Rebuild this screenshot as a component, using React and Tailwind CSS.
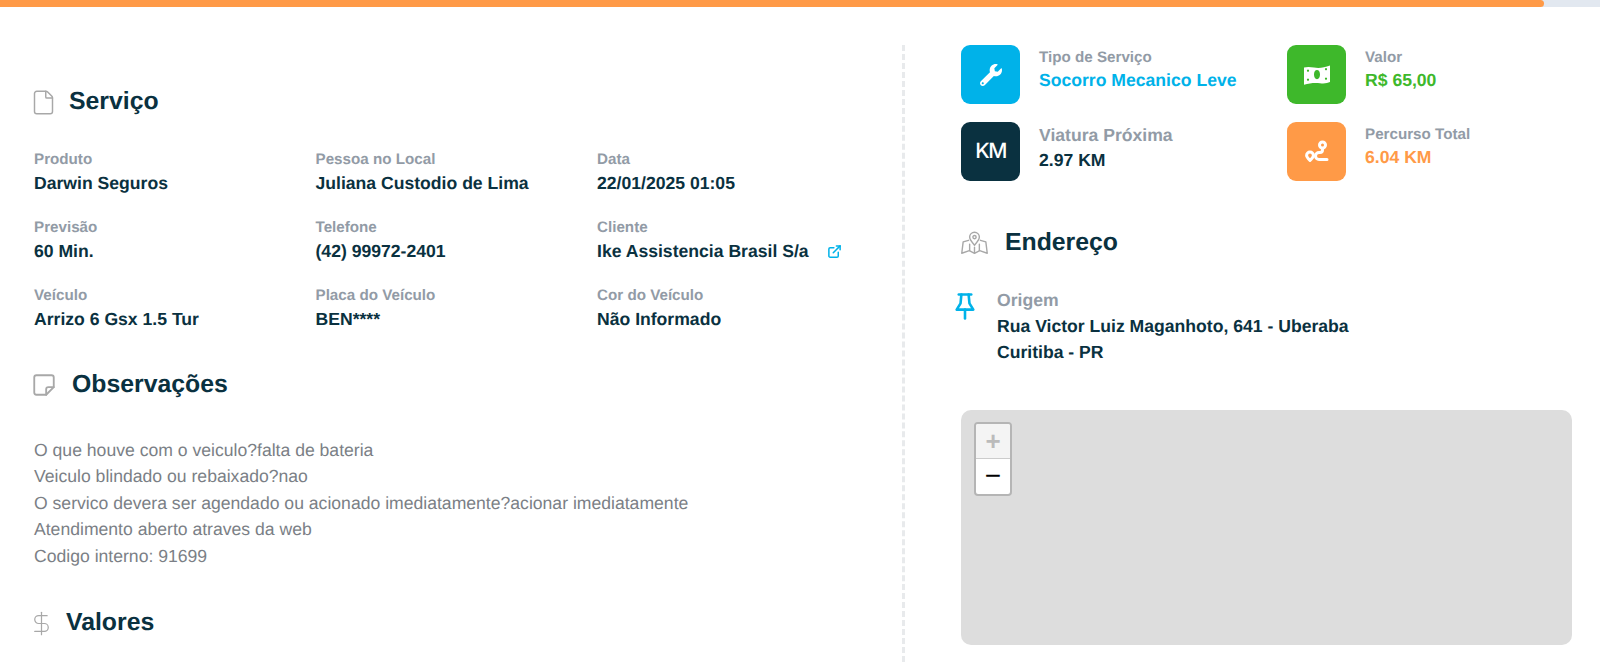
import React from 'react';
import { File, DollarSign, ExternalLink } from 'lucide-react';
import { FaWrench } from 'react-icons/fa';

const servico = [
    { label: 'Produto', value: 'Darwin Seguros' },
    { label: 'Pessoa no Local', value: 'Juliana Custodio de Lima' },
    { label: 'Data', value: '22/01/2025 01:05' },
    { label: 'Previsão', value: '60 Min.' },
    { label: 'Telefone', value: '(42) 99972-2401' },
    { label: 'Cliente', value: 'Ike Assistencia Brasil S/a', link: true },
    { label: 'Veículo', value: 'Arrizo 6 Gsx 1.5 Tur' },
    { label: 'Placa do Veículo', value: 'BEN****' },
    { label: 'Cor do Veículo', value: 'Não Informado' },
];

const observacoes = [
    'O que houve com o veiculo?falta de bateria',
    'Veiculo blindado ou rebaixado?nao',
    'O servico devera ser agendado ou acionado imediatamente?acionar imediatamente',
    'Atendimento aberto atraves da web',
    'Codigo interno: 91699',
];

function RouteIcon() {
    return (
        <svg width="24" height="24" viewBox="0 0 24 24" fill="none" stroke="white" strokeWidth="3" strokeLinecap="round" strokeLinejoin="round">
            <circle cx="17.5" cy="5" r="3" />
            <path d="M17.5 9.500v.5a2.500 2.500 0 0 1-2.500 2.500h-1a3.200 3.200 0 0 0 0 7h8" />
            <path d="M5 20.500c-2-2-3.400-3.400-3.400-5a3.400 3.400 0 0 1 6.800 0c0 1.600-1.400 3-3.400 5z" />
        </svg>
    );
}

function MoneyIcon() {
    return (
        <svg width="26" height="20" viewBox="0 0 26 20">
            <path
                fill="white"
                fillRule="evenodd"
                d="M0 2.500c2.500-.8 6-.8 10 0s10 .5 16-2v16.500c-2.500 1.200-6 1.800-10 1.200s-10-.5-16 1.500z M13 5c-1.900 0-3 2-3 4.500s1.100 4.700 3 4.700 3-2.200 3-4.700-1.100-4.500-3-4.500z M4 4.500a1.100 1.100 0 1 0 .01 0z M22 3a1.100 1.100 0 1 0 .01 0z M4 13.500a1.100 1.100 0 1 0 .01 0z M22 12.500a1.100 1.100 0 1 0 .01 0z"
            />
        </svg>
    );
}

function NoteIcon() {
    return (
        <svg width="26" height="26" viewBox="0 0 24 24" fill="none" stroke="#a8a8a8" strokeWidth="1.700" strokeLinecap="round" strokeLinejoin="round">
            <path d="M5 3h14a2 2 0 0 1 2 2v9l-7 7H5a2 2 0 0 1-2-2V5a2 2 0 0 1 2-2z" />
            <path d="M21 14h-5a2 2 0 0 0-2 2v5" />
        </svg>
    );
}

function MapIcon() {
    return (
        <svg width="27" height="24" viewBox="0 0 25 22" fill="none" stroke="#a8a8a8" strokeWidth="1.300" strokeLinecap="round" strokeLinejoin="round">
            <path d="M12.500 1a4.500 4.500 0 0 0-4.500 4.500c0 2.500 4.500 7.500 4.500 7.500s4.500-5 4.500-7.500a4.500 4.500 0 0 0-4.500-4.500z" />
            <circle cx="12.500" cy="5.500" r="1.500" />
            <path d="M7 8.500l-5 1.500-1.300 10.500 7-2.500 4.800 2.500 4.800-2.500 7 2.500-1.300-10.500-5-1.500" />
            <path d="M8 12v6M17 12v6M12.500 15v5" />
        </svg>
    );
}

function PinIcon() {
    return (
        <svg width="20" height="27" viewBox="0 0 19 26" fill="none" stroke="#00b2e9" strokeWidth="2.500" strokeLinecap="round" strokeLinejoin="round">
            <path d="M3.500 1.500h12" />
            <path d="M6 1.500l-.8 8.500-3.700 6h16l-3.700-6-.8-8.500" />
            <path d="M9.500 16v8.500" />
        </svg>
    );
}

function SectionTitle({ icon, className, children }) {
    return (
        <div className="flex items-center">
            <div className={`flex shrink-0 ${className}`}>{icon}</div>
            <h2 className="text-[24.8px] leading-[30px] font-bold text-[#0a3140]">{children}</h2>
        </div>
    );
}

function Field({ label, value, link }) {
    return (
        <div>
            <div className="text-[15.2px] leading-[20px] font-bold text-[#929ba6]">{label}</div>
            <div className="flex items-center text-[17.6px] leading-[26px] font-bold text-[#0a3140]">
                {value}
                {link && <ExternalLink className="ml-[18px] text-[#00b2e9]" size={15} strokeWidth={2.4} />}
            </div>
        </div>
    );
}

function Stat({ tile, icon, label, value, valueColor, labelClass = 'text-[15.2px] leading-[25px]', valueClass = 'leading-[20px]' }) {
    return (
        <div className="flex items-start">
            <div className={`w-[59px] h-[59px] rounded-[9px] flex items-center justify-center shrink-0 ${tile}`}>{icon}</div>
            <div className="ml-[19px]">
                <div className={`${labelClass} font-bold text-[#929ba6]`}>{label}</div>
                <div className={`text-[17.6px] ${valueClass} font-bold ${valueColor}`}>{value}</div>
            </div>
        </div>
    );
}

export default function App() {
    return (
        <div className="w-[1600px] h-[662px] overflow-hidden bg-white font-['Liberation_Sans',sans-serif] [text-rendering:geometricPrecision]">
            <div className="h-[7px] bg-[#e2e8f0]">
                <div className="h-full w-[1544px] bg-[#ff9a47] rounded-r-[5px]"></div>
            </div>

            <div className="flex mt-[38px]">
                {/* Coluna esquerda */}
                <div className="w-[905px] h-[617px] shrink-0 pl-[34px] pt-[42px] border-r-[3px] border-dashed border-[#e8eaec]">
                    <SectionTitle className="-ml-[4px] mr-[12px]" icon={<File className="text-[#a8a8a8]" size={27} strokeWidth={1.3} />}>Serviço</SectionTitle>

                    <div className="grid grid-cols-[281.500px_281.500px_1fr] gap-y-[22px] mt-[33px]">
                        {servico.map(item => (
                            <Field key={item.label} {...item} />
                        ))}
                    </div>

                    <div className="mt-[38px]">
                        <SectionTitle className="-ml-[3px] mr-[15px]" icon={<NoteIcon />}>Observações</SectionTitle>
                    </div>

                    <div className="mt-[37px] text-[17.6px] leading-[26.4px] text-[#7b7f86]">
                        {observacoes.map(line => (
                            <div key={line}>{line}</div>
                        ))}
                    </div>

                    <div className="mt-[39px]">
                        <SectionTitle className="-ml-[6px] mr-[11px]" icon={<DollarSign className="text-[#a8a8a8]" size={27} strokeWidth={1.1} />}>Valores</SectionTitle>
                    </div>
                </div>

                {/* Coluna direita */}
                <div className="flex-1 pl-[56px] pr-[28px]">
                    <div className="grid grid-cols-[326px_1fr] gap-y-[18px]">
                        <Stat tile="bg-[#00b2e9]" icon={<FaWrench className="text-white" size={22} />} label="Tipo de Serviço" value="Socorro Mecanico Leve" valueColor="text-[#00b2e9]" />
                        <Stat tile="bg-[#3eb82b]" icon={<MoneyIcon />} label="Valor" value="R$ 65,00" valueColor="text-[#3eb82b]" />
                        <Stat tile="bg-[#0a3140]" icon={<span className="text-white text-[21px] font-['Inter',sans-serif] font-medium tracking-[-1.500px]">KM</span>} label="Viatura Próxima" labelClass="text-[17.6px] leading-[27px]" valueClass="leading-[23px]" value="2.97 KM" valueColor="text-[#0a3140]" />
                        <Stat tile="bg-[#ff9a47]" icon={<RouteIcon />} label="Percurso Total" value="6.04 KM" valueColor="text-[#ff9a47]" />
                    </div>

                    <div className="mt-[47px]">
                        <SectionTitle className="mr-[17px]" icon={<MapIcon />}>Endereço</SectionTitle>
                    </div>

                    <div className="flex mt-[29px]">
                        <div className="-ml-[6px] mt-[6px] shrink-0"><PinIcon /></div>
                        <div className="ml-[22px]">
                            <div className="text-[17.6px] leading-[26px] font-bold text-[#929ba6]">Origem</div>
                            <div className="text-[17.6px] leading-[26.4px] font-bold text-[#0a3140]">
                                Rua Victor Luiz Maganhoto, 641 - Uberaba
                                <br />
                                Curitiba - PR
                            </div>
                        </div>
                    </div>

                    <div className="mt-[44px] h-[235px] rounded-[10px] bg-[#dddddd] pt-[12px] pl-[13px]">
                        <div className="w-[38px] h-[74px] rounded-[4px] border-2 border-[#b5b5b5] overflow-hidden bg-white">
                            <div className="h-[35px] bg-[#f4f4f4] border-b border-[#ccc] flex items-center justify-center text-[#bbbbbb] text-[26px] font-bold leading-none">+</div>
                            <div className="h-[35px] flex items-center justify-center text-black text-[28px] font-normal leading-none">−</div>
                        </div>
                    </div>
                </div>
            </div>
        </div>
    );
}
